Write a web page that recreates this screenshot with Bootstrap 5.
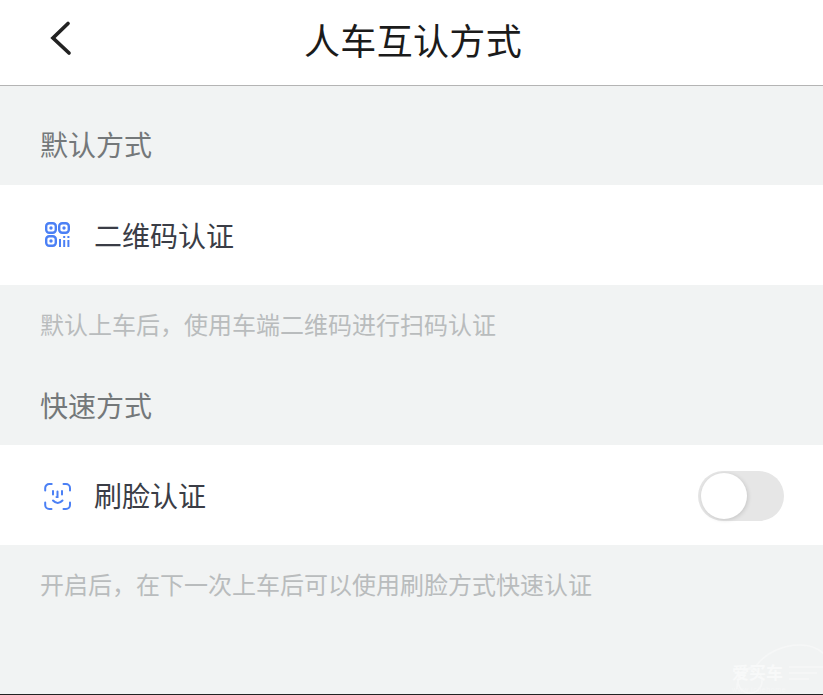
<!DOCTYPE html>
<html lang="zh">
<head>
<meta charset="utf-8">
<title>人车互认方式</title>
<link href="https://cdn.jsdelivr.net/npm/bootstrap@5.3.0/dist/css/bootstrap.min.css" rel="stylesheet">
<style>
html,body{height:100%;margin:0;}
body{background:#f1f3f3;font-family:"Noto Sans CJK SC","Liberation Sans",sans-serif;overflow:hidden;}
.app-screen{height:695px;border-bottom:1px solid #222;position:relative;overflow:hidden;}
.top-bar{height:86px;background:#fff;border-bottom:1px solid #b4b4b4;padding-left:50px;}
.back-ic{margin-bottom:10px;}
.top-title{font-size:36px;color:#1b1b1b;left:0;right:0;top:0;height:85px;line-height:78px;position:absolute;text-align:center;padding-left:3px;letter-spacing:.35px;}
.sec-label{font-size:28px;line-height:40px;color:#74787a;padding-left:40px;}
.sec-first{height:99px;padding-top:38px;}
.sec-second{height:60px;margin-top:-10px;flex-shrink:0;}
.item-row{height:100px;background:#fff;padding-left:45px;padding-right:39px;flex-shrink:0;}
.item-text{font-size:28px;line-height:40px;color:#3a3d46;}
.ic-qr{margin-right:24px;margin-top:-1px;}
.ic-face{margin-left:-1px;margin-right:23px;margin-top:2px;}
.hint-text{font-size:24px;line-height:34px;color:#b9bcbd;padding-left:40px;}
.hint-one{height:110px;padding-top:22px;flex-shrink:0;}
.hint-two{padding-top:22px;}
.toggle-track{width:86px;height:50px;border-radius:25px;background:#e6e6e6;position:relative;margin-top:1px;}
.toggle-knob{width:46px;height:46px;border-radius:50%;background:#fff;position:absolute;left:3px;top:2px;box-shadow:1px 1px 4px rgba(0,0,0,.14);}
.wm-mark{position:absolute;right:0;bottom:0;}
.wm-text{position:absolute;left:732px;bottom:15px;font-size:17px;line-height:14px;font-weight:700;color:#f8f9f9;}
.wm-url{position:absolute;left:732px;bottom:0;font-size:7px;line-height:8px;color:#f6f7f7;font-family:"Liberation Sans",sans-serif;letter-spacing:.6px;}
</style>
</head>
<body>
<div class="app-screen d-flex flex-column">
  <header class="top-bar d-flex align-items-center flex-shrink-0">
    <svg class="back-ic" width="24" height="36" viewBox="0 0 24 36" fill="none" aria-label="返回"><path d="M18 3.500 L3 18 L19 33" stroke="#222" stroke-width="3.700" stroke-linecap="round" stroke-linejoin="miter"/></svg>
    <div class="top-title">人车互认方式</div>
  </header>
  <div class="sec-label sec-first">默认方式</div>
  <div class="item-row d-flex align-items-center">
    <svg class="ic-qr flex-shrink-0" width="25" height="25" viewBox="0 0 25 25" fill="none" stroke="#4b80f5" stroke-width="2.4">
      <rect x="1.2" y="1.2" width="9.6" height="9.6" rx="3"/><circle cx="6" cy="6" r="1.7" fill="#4b80f5" stroke="none"/>
      <rect x="14.2" y="1.2" width="9.6" height="9.6" rx="3"/><circle cx="19" cy="6" r="1.7" fill="#4b80f5" stroke="none"/>
      <rect x="1.2" y="14.2" width="9.6" height="9.6" rx="3"/><circle cx="6" cy="19" r="1.7" fill="#4b80f5" stroke="none"/>
      <path d="M15 17v8M19.2 14v2M19.2 18v7M23.4 14v2M23.4 18v7" stroke-width="2"/>
    </svg>
    <span class="item-text">二维码认证</span>
  </div>
  <div class="hint-text hint-one">默认上车后，使用车端二维码进行扫码认证</div>
  <div class="sec-label sec-second">快速方式</div>
  <div class="item-row d-flex align-items-center justify-content-between">
    <div class="d-flex align-items-center">
      <svg class="ic-face flex-shrink-0" width="27" height="27" viewBox="0 0 27 27" fill="none" stroke="#4b80f5" stroke-width="2" stroke-linecap="round">
        <path d="M1.2 7.500V5a4 4 0 0 1 4-4h2.500M19.500 1H22a4 4 0 0 1 4 4v2.500M26 19.500V22a4 4 0 0 1-4 4h-2.500M7.500 26H5.200a4 4 0 0 1-4-4v-2.500"/>
        <path d="M9 8v3.500M18 8v3.500M13.500 8.500v5.500h-1M9 17.500c3 3.200 6.500 3.200 9.500 0"/>
      </svg>
      <span class="item-text">刷脸认证</span>
    </div>
    <div class="toggle-track flex-shrink-0"><div class="toggle-knob"></div></div>
  </div>
  <div class="hint-text hint-two">开启后，在下一次上车后可以使用刷脸方式快速认证</div>
  <svg class="wm-mark" width="125" height="65" viewBox="0 0 125 65" fill="none" stroke="#f6f7f7" stroke-width="1.600">
    <path d="M39 60c0-14 6-20 19-23 10-14 28-21 44-21 10 0 18 3 24 9"/>
    <circle cx="52" cy="52" r="12"/>
    <path d="M91 38h34M91 44h28M91 50h20"/>
  </svg>
  <div class="wm-text">爱买车</div>
  <div class="wm-url">www.ichehome</div>
</div>
<script src="https://cdn.jsdelivr.net/npm/bootstrap@5.3.0/dist/js/bootstrap.bundle.min.js"></script>
</body>
</html>
